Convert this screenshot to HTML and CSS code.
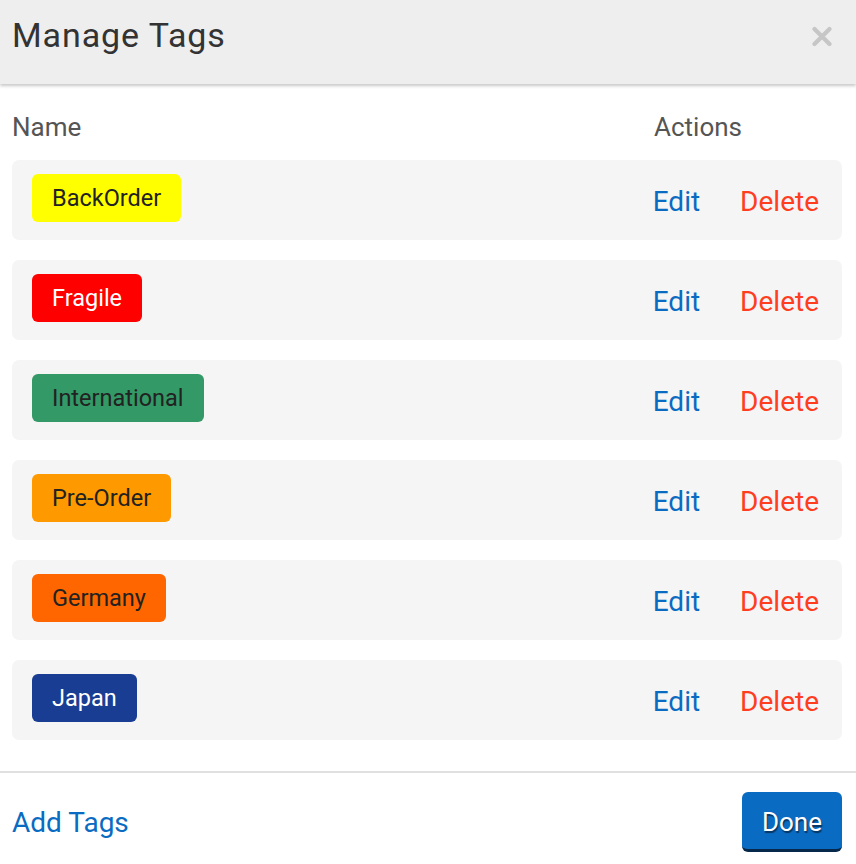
FILE: index.html
```html
<!DOCTYPE html>
<html>
<head>
<meta charset="utf-8">
<link rel="stylesheet" href="styles.css">
</head>
<body>
<div class="modal">
  <div class="header">
    <h1 class="title">Manage Tags</h1>
    <svg class="close" width="20" height="21" viewBox="0 0 20 21"><path d="M2.5 3 L17.5 18 M17.5 3 L2.5 18" stroke="#c6c6c6" stroke-width="4.2" stroke-linecap="round" fill="none"/></svg>
  </div>
  <div class="body">
    <div class="cols">
      <span class="col-name">Name</span>
      <span class="col-actions">Actions</span>
    </div>
    <div class="rows">
      <div class="row"><span class="tag t-yellow">BackOrder</span><div class="actions"><a class="edit">Edit</a><a class="delete">Delete</a></div></div>
      <div class="row"><span class="tag t-red">Fragile</span><div class="actions"><a class="edit">Edit</a><a class="delete">Delete</a></div></div>
      <div class="row"><span class="tag t-green">International</span><div class="actions"><a class="edit">Edit</a><a class="delete">Delete</a></div></div>
      <div class="row"><span class="tag t-orange">Pre-Order</span><div class="actions"><a class="edit">Edit</a><a class="delete">Delete</a></div></div>
      <div class="row"><span class="tag t-dorange">Germany</span><div class="actions"><a class="edit">Edit</a><a class="delete">Delete</a></div></div>
      <div class="row"><span class="tag t-blue">Japan</span><div class="actions"><a class="edit">Edit</a><a class="delete">Delete</a></div></div>
    </div>
  </div>
  <div class="footer">
    <a class="add">Add Tags</a>
    <button class="done">Done</button>
  </div>
</div>
</body>
</html>
```
FILE: styles.css
```css
* { box-sizing: border-box; }
html, body { margin: 0; padding: 0; background: #fff; }
body { font-family: Roboto, "Noto Sans", sans-serif; width: 856px; height: 864px; overflow: hidden; }
.modal { display: flex; flex-direction: column; }
.header {
  height: 84px;
  background: #eeeeee;
  display: flex;
  align-items: center;
  justify-content: space-between;
  padding: 0 24px 14px 12px;
  box-shadow: 0 2px 3px rgba(0,0,0,0.22);
  position: relative;
  z-index: 1;
}
.title { margin: 0; font-size: 34px; font-weight: 400; color: #333; letter-spacing: 0.9px; line-height: 40px; }
.close { display: block; margin-top: 2px; }
.body { padding: 0 14px 0 12px; }
.cols { display: flex; height: 76px; align-items: center; padding-top: 10px; font-size: 26px; color: #555; line-height: 30px; }
.col-name { flex: 1; }
.col-actions { width: 188px; }
.rows { display: flex; flex-direction: column; gap: 20px; padding-bottom: 31px; }
.row {
  height: 80px;
  background: #f5f5f5;
  border-radius: 7px;
  display: flex;
  align-items: center;
  justify-content: space-between;
  padding: 0 23px 0 20px;
}
.tag {
  height: 48px;
  line-height: 48px;
  padding: 0 20px;
  margin-bottom: 4px;
  border-radius: 6px;
  font-size: 23.5px;
  color: #222;
}
.t-yellow { background: #ffff00; }
.t-red { background: #ff0000; color: #fff; }
.t-green { background: #339966; color: #222; }
.t-orange { background: #ff9900; }
.t-dorange { background: #ff6600; }
.t-blue { background: #1a3d94; color: #fff; }
.actions { display: flex; gap: 40px; font-size: 28px; line-height: 34px; padding-top: 3px; }
.edit { color: #0a6bc2; }
.delete { color: #ff3d1f; }
.footer {
  border-top: 2px solid #e0e0e0;
  display: flex;
  justify-content: space-between;
  align-items: center;
  padding: 19px 14px 12px 12px;
}
.add { color: #0a6bc2; font-size: 28px; line-height: 34px; margin-top: 1px; }
.done {
  width: 100px;
  height: 60px;
  background: #0a6bc2;
  border: none;
  border-bottom: 3px solid #06284a;
  border-radius: 6px;
  color: #fff;
  font-family: Roboto, sans-serif;
  font-size: 26px;
  text-shadow: 1px 2px 1px rgba(0,0,0,0.5);
  padding: 2px 0 0 0;
}
```
